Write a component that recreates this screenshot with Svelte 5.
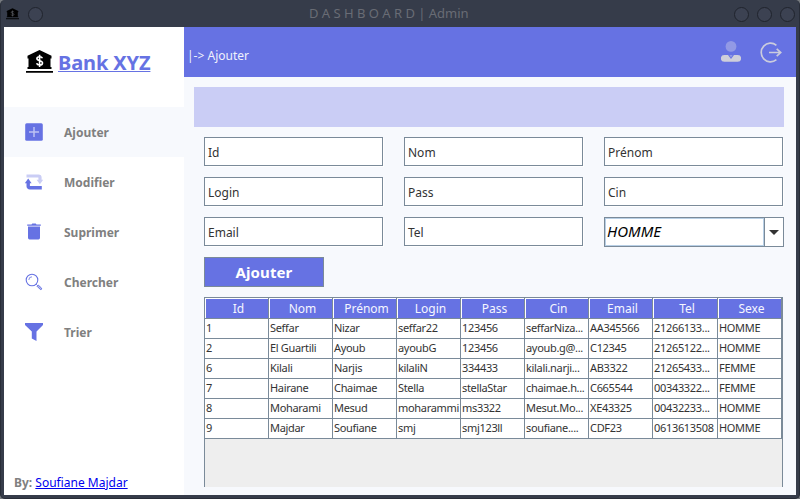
<script>
  const menu = ['Ajouter', 'Modifier', 'Suprimer', 'Chercher', 'Trier'];
  const fields = ['Id', 'Nom', 'Prénom', 'Login', 'Pass', 'Cin', 'Email', 'Tel'];
  const columns = ['Id', 'Nom', 'Prénom', 'Login', 'Pass', 'Cin', 'Email', 'Tel', 'Sexe'];
  const rows = [
    ['1', 'Seffar', 'Nizar', 'seffar22', '123456', 'seffarNiza...', 'AA345566', '21266133...', 'HOMME'],
    ['2', 'El Guartili', 'Ayoub', 'ayoubG', '123456', 'ayoub.g@...', 'C12345', '21265122...', 'HOMME'],
    ['6', 'Kilali', 'Narjis', 'kilaliN', '334433', 'kilali.narji...', 'AB3322', '21265433...', 'FEMME'],
    ['7', 'Hairane', 'Chaimae', 'Stella', 'stellaStar', 'chaimae.h...', 'C665544', '00343322...', 'FEMME'],
    ['8', 'Moharami', 'Mesud', 'moharammi', 'ms3322', 'Mesut.Mo...', 'XE43325', '00432233...', 'HOMME'],
    ['9', 'Majdar', 'Soufiane', 'smj', 'smj123ll', 'soufiane....', 'CDF23', '0613613508', 'HOMME']
  ];
</script>

{#snippet bank(w, h, sign)}
  <svg width={w} height={h} viewBox="0 0 27 24">
    <path d="M13.5 0 25.5 5.8V8.5H24.5V17H25.5V19H1.5V17H2.5V8.5H1.5V5.8ZM0 21H27V22.8H0Z" fill="#000" />
    <path d="M16.4 8.2C16 7.1 15 6.7 13.6 6.7C11.9 6.7 10.9 7.5 10.9 8.6C10.9 11.5 16.5 9.9 16.5 12.9C16.5 14.2 15.3 15 13.6 15C12 15 11 14.5 10.6 13.3M13.6 4.8V17" fill="none" stroke={sign} stroke-width="1.6" />
  </svg>
{/snippet}

<div class="window">
  <header class="titlebar">
    <span class="appicon">{@render bank(13, 12, '#56595f')}</span>
    <i class="dot"></i>
    <span class="title">D A S H B O A R D | Admin</span>
    <i class="dot"></i><i class="dot"></i><i class="dot"></i>
  </header>
  <div class="body">
    <aside>
      <div class="brand">
        {@render bank(27, 24, '#fff')}
        <span class="name">Bank XYZ</span>
      </div>
      <nav>
        {#each menu as item, i}
          <div class="item" class:active={i === 0}>
            <svg width="20" height="20" viewBox="0 0 20 20">
              {#if i === 0}
                <rect x="1.2" y="1.2" width="17.6" height="17.6" rx="1.5" fill="#6672e3" />
                <path d="M10 5V15M5 10H15" stroke="#bdc2f3" stroke-width="1.5" />
              {:else if i === 1}
                <path d="M2.5 4H14.5Q16 4 16 5.5V8" fill="none" stroke="#cacdf5" stroke-width="3.2" />
                <path d="M12.6 7.8H19.2L15.9 12.2Z" fill="#cacdf5" />
                <path d="M17.8 15.7H5.8Q4.2 15.7 4.2 14.2V10.5" fill="none" stroke="#6672e3" stroke-width="3.4" />
                <path d="M0.8 11.2H7.6L4.2 6.6Z" fill="#6672e3" />
              {:else if i === 2}
                <path d="M3.2 2.5H7.5L8.3 1.6H11.7L12.5 2.5H16.8V3.7H3.2ZM4 4.6H16V15.7Q16 17.4 14.5 17.4H5.5Q4 17.4 4 15.7Z" fill="#6672e3" />
              {:else if i === 3}
                <circle cx="8" cy="8" r="5.8" fill="none" stroke="#6672e3" stroke-width="1.1" />
                <path d="M4.8 8A3.2 3.2 0 0 1 8 4.8M12.1 12.1L13.5 13.5" fill="none" stroke="#6672e3" stroke-width=".8" />
                <path d="M13 14.2L14.2 13L17.6 16.2Q18 17.6 16.4 17.6Z" fill="#b6bcf2" stroke="#6672e3" stroke-width="1" />
              {:else}
                <path d="M1 1H19V3L12.5 9.5V19L7.8 16.5V9.5L1 3Z" fill="#6672e3" />
              {/if}
            </svg>
            <span>{item}</span>
          </div>
        {/each}
      </nav>
      <div class="credit"><b>By:</b> <span>Soufiane Majdar</span></div>
    </aside>
    <main>
      <div class="topbar">
        <span class="crumb">|-&gt; Ajouter</span>
        <svg class="user" width="20" height="22" viewBox="0 0 20 22">
          <circle cx="10" cy="6.4" r="5.4" fill="#9299e5" />
          <path d="M3.3 15H7L10 19L13 15H16.7A3.3 3.3 0 0 1 16.7 21.8H3.3A3.3 3.3 0 0 1 3.3 15Z" fill="#cfcfda" />
          <path d="M8.4 15H11.6L10 17.8Z" fill="#9299e5" />
        </svg>
        <svg class="exit" width="22" height="22" viewBox="0 0 22 22">
          <path d="M16.4 4.3A9.3 9.3 0 1 0 16.4 18.7" fill="none" stroke="#cbccdd" stroke-width="1.7" />
          <path d="M9 11.5H20.5M16.7 7.8L20.7 11.5L16.7 15.2" fill="none" stroke="#cbccdd" stroke-width="1.7" />
        </svg>
      </div>
      <div class="banner"></div>
      <div class="form">
        {#each fields as f}
          <div class="field"><span>{f}</span></div>
        {/each}
        <div class="combo">
          <div class="value"><span>HOMME</span></div>
          <div class="arrow"><svg width="10" height="5" viewBox="0 0 10 5"><path d="M0 0H10L5 5Z" fill="#333" /></svg></div>
        </div>
      </div>
      <div class="submit"><span>Ajouter</span></div>
      <div class="table">
        <div class="row head">
          {#each columns as c}<div class="cell"><span>{c}</span></div>{/each}
        </div>
        {#each rows as r}
          <div class="row">
            {#each r as v}<div class="cell"><span>{v}</span></div>{/each}
          </div>
        {/each}
      </div>
    </main>
  </div>
</div>

<style>
  :global(body) { background: #777b80; overflow: hidden; }
  .window {
    box-sizing: border-box; width: 800px; height: 499px; background: #363c4a;
    border: 1px solid #282d38; border-top: 0; border-radius: 5px; padding: 0 3px 3px;
    display: flex; flex-direction: column; overflow: hidden;
    font-family: "Noto Sans", sans-serif; font-size: 12px; color: #333; white-space: nowrap;
  }
  svg { display: block; flex: none; }
  .titlebar { height: 27px; display: flex; align-items: center; flex: none; padding: 1px 0 0 2px; box-sizing: border-box; }
  .appicon { width: 13px; margin-right: 9px; }
  .dot { width: 15px; height: 15px; box-sizing: border-box; border: 1px solid #20242d; border-radius: 50%; margin-right: 8px; background: #3c4252; flex: none; }
  .dot:last-child { margin-right: 1px; }
  .title { flex: 1; padding-left: 258px; font-size: 13px; line-height: 18px; margin-top: -2px; letter-spacing: -0.01px; color: #696c75; }
  .body { flex: 1; display: flex; min-height: 0; }
  aside { width: 180px; background: #fff; display: flex; flex-direction: column; }
  .brand { height: 80px; box-sizing: border-box; padding: 23px 0 0 22px; display: flex; align-items: flex-start; }
  .name { margin-left: 5px; margin-top: -1px; font-size: 20px; line-height: 28px; letter-spacing: -0.12px; font-weight: 700; color: #6672e3; text-decoration: underline; text-decoration-thickness: 1px; text-underline-offset: 1px; }
  .item { height: 50px; display: flex; align-items: center; padding-left: 20px; color: #808080; font-weight: 700; }
  .item span { margin-left: 20px; }
  .active { background: #f7f9fd; }
  .credit { margin-top: auto; padding-left: 10px; height: 21px; line-height: 18px; color: #808080; }
  .credit span { color: #0000ee; text-decoration: underline; text-underline-offset: 1px; }
  main { flex: 1; background: #f7f9fd; display: flex; flex-direction: column; }
  .topbar { height: 50px; flex: none; background: #6672e3; display: flex; align-items: flex-start; color: #f0f1fc; }
  .crumb { flex: 1; padding-left: 3px; line-height: 16px; margin-top: 21px; }
  .user { margin: 13px 19px 0 0; }
  .exit { margin: 14px 14px 0 0; }
  .banner { height: 40px; margin: 10px 12px 0 10px; background: #cacdf5; flex: none; }
  .form { display: grid; grid-template-columns: repeat(3, 180px); grid-auto-rows: 30px; gap: 10px 20px; margin: 10px 0 0 20px; }
  .field { box-sizing: border-box; width: 179px; height: 29px; border: 1px solid #7a8a99; background: #fff; padding: 1px 0 0 3px; box-shadow: 1px 1px 0 #fff; }
  .field span { display: block; line-height: 27px; }
  .combo { display: flex; box-sizing: border-box; border: 1px solid #7a8a99; background: #fff; }
  .value { flex: 1; box-sizing: border-box; border: 1px solid #b8cfe5; padding-left: 1px; font-size: 15px; line-height: 24px; font-style: italic; color: #000; }
  .arrow { width: 18px; border-left: 1px solid #7a8a99; display: flex; align-items: center; justify-content: center; }
  .submit { box-sizing: border-box; width: 120px; height: 30px; margin: 10px 0 0 20px; flex: none; border: 1px solid #7a8a99; background: #6672e3; color: #fff; font-weight: 700; font-size: 15px; line-height: 29px; text-align: center; letter-spacing: 0.1px; }
  .table { box-sizing: border-box; width: 579px; height: 190px; flex: none; margin: 10px 0 0 20px; border: 1px solid #7a8a99; border-bottom: 0; background: #eee; font-size: 11px; }
  .row { display: grid; grid-template-columns: repeat(7, 64px) 65px 64px; height: 20px; background: #fff; letter-spacing: -0.32px; }
  .cell { box-sizing: border-box; border-right: 1px solid #7a8a99; border-bottom: 1px solid #7a8a99; padding-left: 1px; line-height: 17px; overflow: hidden; }
  .head { height: 21px; font-size: 12px; color: #f5f6ff; letter-spacing: 0; }
  .head .cell { background: #6672e3; box-shadow: inset 1px 1px 0 #fff; text-align: center; padding: 1px 0 0 4px; line-height: 20px; }
</style>
